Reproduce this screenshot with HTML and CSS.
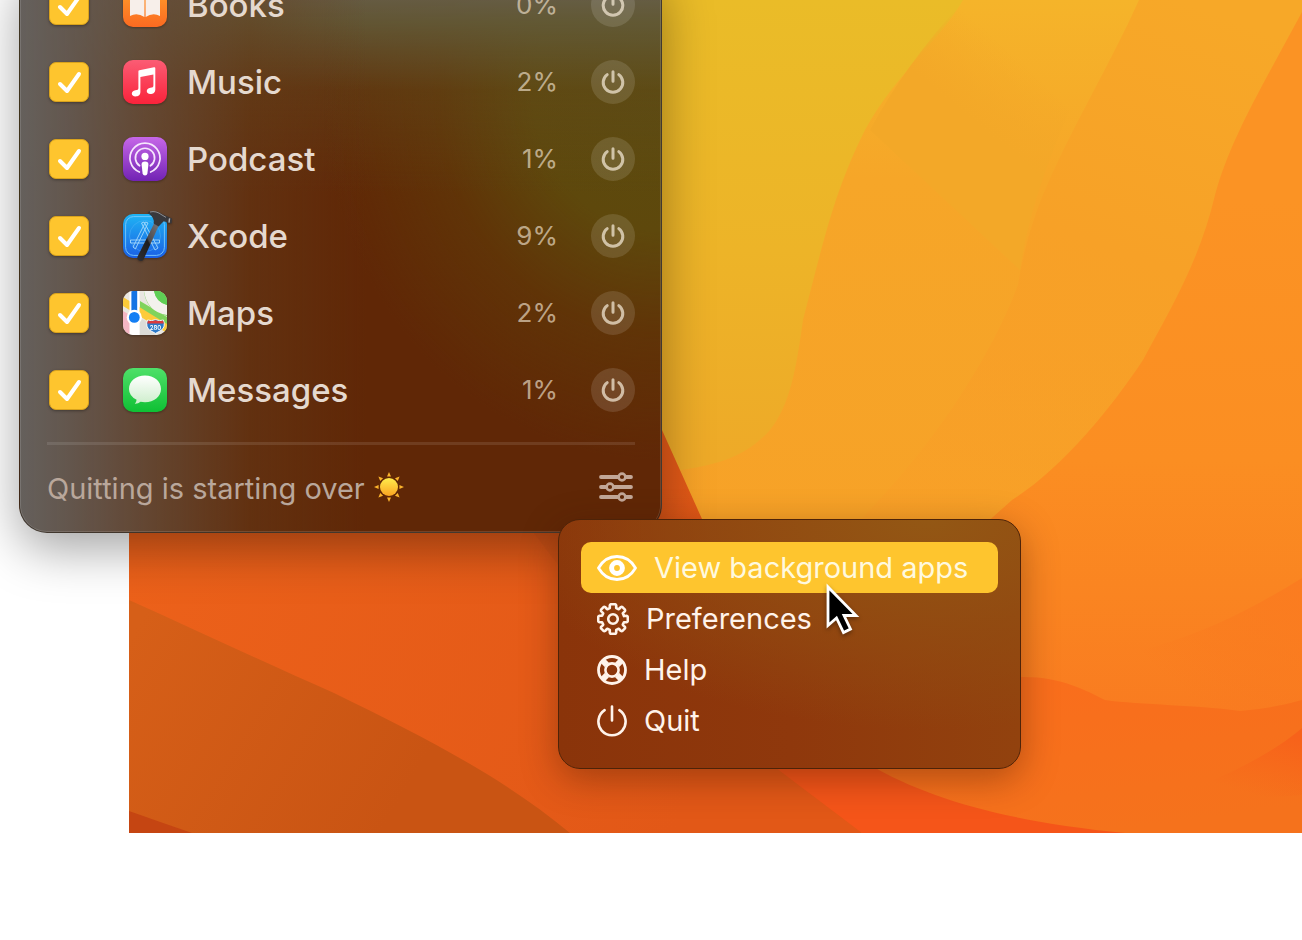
FILE: index.html
```
<!DOCTYPE html>
<html lang="en">
<head>
	<title>Background apps</title>
	<meta charset="utf-8">
	<meta name="viewport" content="width=device-width, initial-scale=1">
	<link rel="stylesheet" href="styles.css">
</head>
<body>

	<svg class="defs" aria-hidden="true">
		<symbol id="power" viewBox="0 0 24 24">
			<path d="M6.2 4.6a9.8 9.8 0 1 0 11.6 0M12 1.8v9.4" fill="none" stroke="currentColor" stroke-width="3" stroke-linecap="round"/>
		</symbol>
	</svg>

	<main class="desktop">

		<!-- wallpaper -->
		<svg class="wallpaper" viewBox="129 0 1173 833" aria-hidden="true">
			<defs>
				<linearGradient id="yellow" x1="0" y1="0" x2="0" y2="1">
					<stop offset="0" stop-color="#eabc28"/><stop offset=".3" stop-color="#edb428"/><stop offset=".6" stop-color="#eea828"/>
				</linearGradient>
				<linearGradient id="fold1" x1="0" y1="0" x2="0" y2="1">
					<stop offset="0" stop-color="#f5b42a"/><stop offset=".3" stop-color="#f6a628"/><stop offset="1" stop-color="#f7a127"/>
				</linearGradient>
				<linearGradient id="fold2" gradientUnits="userSpaceOnUse" x1="1180" y1="0" x2="1000" y2="480">
					<stop offset="0" stop-color="#f7a828"/><stop offset=".5" stop-color="#f7a127"/><stop offset="1" stop-color="#fa9b27" stop-opacity=".3"/>
				</linearGradient>
				<linearGradient id="facet" gradientUnits="userSpaceOnUse" x1="960" y1="110" x2="1010" y2="50">
					<stop offset="0" stop-color="#f3a828"/><stop offset="1" stop-color="#f3a828" stop-opacity="0"/>
				</linearGradient>
				<linearGradient id="fold3" gradientUnits="userSpaceOnUse" x1="1220" y1="200" x2="1220" y2="720">
					<stop offset="0" stop-color="#fb9324"/><stop offset=".5" stop-color="#fb8e22"/><stop offset="1" stop-color="#f97b20"/>
				</linearGradient>
				<linearGradient id="ridge" gradientUnits="userSpaceOnUse" x1="1290" y1="570" x2="1180" y2="690">
					<stop offset="0" stop-color="#fb7c20"/><stop offset="1" stop-color="#f9761e" stop-opacity="0"/>
				</linearGradient>
				<linearGradient id="lava" gradientUnits="userSpaceOnUse" x1="1080" y1="680" x2="1100" y2="833">
					<stop offset="0" stop-color="#f96e1c"/><stop offset="1" stop-color="#f5721c"/>
				</linearGradient>
				<linearGradient id="glow" gradientUnits="userSpaceOnUse" x1="1290" y1="735" x2="1270" y2="800">
					<stop offset="0" stop-color="#f7621a"/><stop offset="1" stop-color="#f7651a" stop-opacity="0"/>
				</linearGradient>
				<linearGradient id="ember" gradientUnits="userSpaceOnUse" x1="129" y1="560" x2="700" y2="760">
					<stop offset="0" stop-color="#ec611a"/><stop offset="1" stop-color="#e25817"/>
				</linearGradient>
				<linearGradient id="clay" gradientUnits="userSpaceOnUse" x1="129" y1="640" x2="400" y2="800">
					<stop offset="0" stop-color="#d65f18"/><stop offset="1" stop-color="#c95413"/>
				</linearGradient>
			</defs>
			<rect x="129" width="1173" height="833" fill="url(#yellow)"/>
			<path d="M963 0C940 40 895 75 865 130C835 190 825 235 803 320C796 370 790 405 770 430C745 458 715 465 680 470L700 600H1302V0z" fill="url(#fold1)"/>
			<path d="M961 4L1070 110Q1030 200 1020 270L870 130Q905 65 961 4z" fill="url(#facet)"/>
			<path d="M1139 0C1110 65 1070 130 1042 197Q1025 240 1018 285C990 360 930 450 860 520H1302V0z" fill="url(#fold2)"/>
			<path d="M1302 12C1260 90 1230 140 1215 195C1200 260 1170 310 1143 360C1110 410 1060 470 1012 500L900 600V833H1302z" fill="url(#fold3)"/>
			<path d="M1302 578C1250 610 1210 630 1160 645C1120 660 1060 640 1000 640V720H1302z" fill="url(#ridge)"/>
			<path d="M860 640Q960 675 1020 677C1060 676 1085 690 1105 700C1140 705 1200 705 1240 711Q1275 708 1302 700V833H860z" fill="url(#lava)"/>
			<path d="M1302 728Q1265 760 1190 790Q1250 800 1302 795z" fill="url(#glow)"/>
			<path d="M600 300L662 430 702 519 800 740 862 833H129V300z" fill="url(#ember)"/>
			<path d="M533 532L600 620V500z" fill="#dc5818" opacity=".7"/>
			<path d="M700 700C740 745 800 785 862 833H1125C1010 822 930 800 868 764L780 700z" fill="#f55519"/>
			<path d="M129 600C200 632 270 665 334 693C420 735 500 775 570 833H129z" fill="url(#clay)"/>
			<path d="M129 811Q160 822 192 833H129z" fill="#c54512"/>
		</svg>

		<!-- list of running apps -->
		<section class="panel" aria-label="Running apps">
			<ul class="apps">
				<li class="app">
					<label>
						<input type="checkbox" checked>
						<svg class="app-icon" viewBox="0 0 44 44">
							<defs><linearGradient id="books" x1="0" y1="0" x2="0" y2="1"><stop offset="0" stop-color="#ffa42c"/><stop offset="1" stop-color="#fb6a21"/></linearGradient></defs>
							<rect width="44" height="44" rx="10" fill="url(#books)"/>
							<path d="M21.4 13Q14 8 7 12V33Q14 29 21.4 34zM22.6 13Q30 8 37 12V33Q30 29 22.6 34z" fill="#f7efea"/>
						</svg>
						<span>Books</span>
					</label>
					<span class="cpu">0%</span>
					<button class="kill" aria-label="Quit Books"><svg><use href="#power"/></svg></button>
				</li>
				<li class="app">
					<label>
						<input type="checkbox" checked>
						<svg class="app-icon" viewBox="0 0 44 44">
							<defs><linearGradient id="music" x1="0" y1="0" x2="0" y2="1"><stop offset="0" stop-color="#fb5c74"/><stop offset="1" stop-color="#fa233b"/></linearGradient></defs>
							<rect width="44" height="44" rx="10" fill="url(#music)"/>
							<path d="M15.4 11.3Q15.4 10.4 16.4 10.2L31 7.3Q32.3 7 32.3 8.3V29.4C32.3 32.6 30 34 27.4 34C22.6 34 22.6 28.4 27.4 27.8C29.6 27.5 30.4 27.4 30.4 25.6V14.6L17.4 17.1V32C17.4 35.2 15.2 36.4 12.6 36.4C7.6 36.4 7.6 30.8 12.4 30.2C14.6 29.9 15.4 29.8 15.4 28z" fill="#fff"/>
						</svg>
						<span>Music</span>
					</label>
					<span class="cpu">2%</span>
					<button class="kill" aria-label="Quit Music"><svg><use href="#power"/></svg></button>
				</li>
				<li class="app">
					<label>
						<input type="checkbox" checked>
						<svg class="app-icon" viewBox="0 0 44 44">
							<defs><linearGradient id="podcast" x1="0" y1="0" x2="0" y2="1"><stop offset="0" stop-color="#c667e8"/><stop offset="1" stop-color="#7223b4"/></linearGradient></defs>
							<rect width="44" height="44" rx="10" fill="url(#podcast)"/>
							<g fill="none" stroke="#f6e6fd" stroke-width="1.7" stroke-linecap="round">
								<path d="M16.4 35A15 15 0 1 1 27.6 35"/>
								<path d="M16.6 28.8A9.6 9.6 0 1 1 27.4 28.8"/>
							</g>
							<circle cx="22" cy="19.4" r="3.6" fill="#fff"/>
							<path d="M18.6 27.4Q18.6 24.6 22 24.6T25.4 27.4L24.4 36.4Q24.1 38.4 22 38.4T19.6 36.4z" fill="#fff"/>
						</svg>
						<span>Podcast</span>
					</label>
					<span class="cpu">1%</span>
					<button class="kill" aria-label="Quit Podcast"><svg><use href="#power"/></svg></button>
				</li>
				<li class="app">
					<label>
						<input type="checkbox" checked>
						<svg class="app-icon" viewBox="0 0 44 44">
							<defs>
								<linearGradient id="xcode" x1="0" y1="0" x2="0" y2="1"><stop offset="0" stop-color="#1fb4f4"/><stop offset="1" stop-color="#1a5fe4"/></linearGradient>
								<linearGradient id="handle" x1="1" y1="0" x2="0" y2="1"><stop offset="0" stop-color="#77757a"/><stop offset=".45" stop-color="#4b4b50"/><stop offset=".5" stop-color="#1d1d20"/><stop offset="1" stop-color="#303034"/></linearGradient>
							</defs>
							<rect width="44" height="44" rx="10" fill="url(#xcode)"/>
							<rect x="2.6" y="2.6" width="38.8" height="38.8" rx="8" fill="none" stroke="#7cc9fb" stroke-width=".9"/>
							<circle cx="22" cy="22" r="15.5" fill="none" stroke="#5ab8f8" stroke-width=".6" opacity=".7"/>
							<g fill="none" stroke="#a5d8fc" stroke-width=".9" stroke-linejoin="round">
								<path d="M18.5 9L21 8 35 34 32 36zM25 9L22.5 8 10 33 12.4 35zM7.5 26H36.5V29H7.5z"/>
							</g>
							<path d="M31.4 9L35.8 11.4 20.6 45.4Q18.6 48 15.6 46.2Q13.6 45 14.6 42.4z" fill="url(#handle)"/>
							<path d="M25-2Q32-5 40 .4L44.6 2.4 49 4.4 48.6 9.6 44.6 9Q43 7 40.4 7.6L35.6 12.4 30.6 9.6Q32 4 25.4-.4z" fill="#38383c"/>
							<path d="M27-2Q33-3.6 39 1L43 3.4" fill="none" stroke="#98989c" stroke-width=".9"/>
							<path d="M46.6 4.4L46 8.6" stroke="#b0b0b4" stroke-width="1.4"/>
						</svg>
						<span>Xcode</span>
					</label>
					<span class="cpu">9%</span>
					<button class="kill" aria-label="Quit Xcode"><svg><use href="#power"/></svg></button>
				</li>
				<li class="app">
					<label>
						<input type="checkbox" checked>
						<svg class="app-icon" viewBox="0 0 44 44">
							<defs><clipPath id="mapclip"><rect width="44" height="44" rx="10"/></clipPath></defs>
							<g clip-path="url(#mapclip)">
								<rect width="44" height="44" fill="#e9e6e0"/>
								<path d="M17 10L44 26V34L30 26 17 18z" fill="#7fd35c"/>
								<path d="M21 0Q23 20 44 25V0z" fill="#7ad65a"/>
								<path d="M21 0Q24 21 44 24V14Q33 11 31 0z" fill="#f3f1ec"/>
								<path d="M31 0Q33 11 44 14V0z" fill="#5fcf55"/>
								<path d="M0 6L44 33V42L0 15z" fill="#fccb3a"/>
								<path d="M0 20L7 24V44H0z" fill="#f4b6c4"/>
								<path d="M17 27L32 36V44H17z" fill="#dcdcd8"/>
								<path d="M6.5 0H16.5V44H6.5z" fill="#fff"/>
								<path d="M8.4 0H14.2V24H8.4z" fill="#1474e4"/>
								<circle cx="11.3" cy="26.4" r="7.6" fill="#fff"/>
								<circle cx="11.3" cy="26.4" r="5.4" fill="#147ff4"/>
								<path d="M24.6 29Q28.5 30.4 32.5 28.6Q36.5 30.4 40.4 29Q43 36 38 39.4L32.5 42.4 27 39.4Q22 36 24.6 29z" fill="#2c79c8" stroke="#fff" stroke-width=".9"/>
								<path d="M25 29.4Q28.5 30.8 32.5 29.2Q36.5 30.8 40 29.4L40.8 32.4H24.2z" fill="#dc3a3c"/>
								<text x="32.5" y="38.8" class="shield">280</text>
							</g>
						</svg>
						<span>Maps</span>
					</label>
					<span class="cpu">2%</span>
					<button class="kill" aria-label="Quit Maps"><svg><use href="#power"/></svg></button>
				</li>
				<li class="app">
					<label>
						<input type="checkbox" checked>
						<svg class="app-icon" viewBox="0 0 44 44">
							<defs>
								<linearGradient id="msg" x1="0" y1="0" x2="0" y2="1"><stop offset="0" stop-color="#4fe069"/><stop offset="1" stop-color="#0fc034"/></linearGradient>
								<linearGradient id="bubble" x1="0" y1="0" x2="0" y2="1"><stop offset="0" stop-color="#fff"/><stop offset="1" stop-color="#cdeecb"/></linearGradient>
							</defs>
							<rect width="44" height="44" rx="10" fill="url(#msg)"/>
							<path d="M22 7.6C31 7.6 38 13.4 38 21C38 28.6 31 34.2 22 34.2Q19.6 34.2 17.6 33.8Q15 36 11.8 35.8Q13.4 34.2 13.6 31.8Q6 28 6 21C6 13.4 13 7.6 22 7.6z" fill="url(#bubble)"/>
						</svg>
						<span>Messages</span>
					</label>
					<span class="cpu">1%</span>
					<button class="kill" aria-label="Quit Messages"><svg><use href="#power"/></svg></button>
				</li>
			</ul>
			<footer class="panel-foot">
				<p>Quitting is starting over</p>
				<svg class="sun" viewBox="-15 -15 30 30" aria-hidden="true">
					<defs><linearGradient id="sunfill" x1="0" y1="0" x2="0" y2="1"><stop offset="0" stop-color="#ffec4c"/><stop offset="1" stop-color="#fba421"/></linearGradient></defs>
					<g fill="#fbb32c">
						<path d="M-2-10.4L0-15 2-10.4zM-2 10.4L0 15 2 10.4zM-10.4-2L-15 0-10.4 2zM10.4-2L15 0 10.4 2z"/>
						<path transform="rotate(45)" d="M-2-10.4L0-15 2-10.4zM-2 10.4L0 15 2 10.4zM-10.4-2L-15 0-10.4 2zM10.4-2L15 0 10.4 2z"/>
					</g>
					<circle r="9" fill="url(#sunfill)"/>
				</svg>
				<button class="options" aria-label="Options">
					<svg viewBox="0 0 34 30">
						<g fill="none" stroke="currentColor" stroke-width="3.8" stroke-linecap="round">
							<path d="M2 5H19M27 5H32M2 15H7M15 15H32M2 25H19M27 25H32"/>
							<g stroke-width="2.6"><circle cx="23" cy="5" r="3.4"/><circle cx="11" cy="15" r="3.4"/><circle cx="23" cy="25" r="3.4"/></g>
						</g>
					</svg>
				</button>
			</footer>
		</section>

		<!-- options menu -->
		<nav class="menu" aria-label="Options">
			<button class="menu-item active">
				<svg width="40" height="26" viewBox="0 0 40 26">
					<path d="M1.5 13C5.5 6 12 1.5 20 1.5S34.5 6 38.5 13C34.5 20 28 24.5 20 24.5S5.5 20 1.5 13z" fill="none" stroke="#fff" stroke-width="2.8" stroke-linejoin="round"/>
					<circle cx="20" cy="13" r="5.4" fill="none" stroke="#fff" stroke-width="5"/>
				</svg>
				View background apps
			</button>
			<button class="menu-item">
				<svg width="32" height="32" viewBox="-16 -16 32 32">
					<g fill="none" stroke="currentColor" stroke-width="2.6" stroke-linejoin="round">
						<path d="M10.9-2.9Q11.4-3.2 13.6-3.2 14.8-2.9 14.8-1.7V1.7Q14.8 2.9 13.6 3.2 11.4 3.2 10.9 3.2L9.8 5.65Q10.2 6.6 11.9 7.8 12.4 8.8 11.7 9.7L9.7 11.7Q8.8 12.4 7.8 11.9 6.6 10.2 5.65 9.8L3.2 10.9Q3.2 11.4 3.2 13.6 2.9 14.8 1.7 14.8H-1.7Q-2.9 14.8-3.2 13.6-3.2 11.4-3.2 10.9L-5.65 9.8Q-6.6 10.2-7.8 11.9-8.8 12.4-9.7 11.7L-11.7 9.7Q-12.4 8.8-11.9 7.8-10.2 6.6-9.8 5.65L-10.9 3.2Q-11.4 3.2-13.6 3.2-14.8 2.9-14.8 1.7V-1.7Q-14.8-2.9-13.6-3.2-11.4-3.2-10.9-3.2L-9.8-5.65Q-10.2-6.6-11.9-7.8-12.4-8.8-11.7-9.7L-9.7-11.7Q-8.8-12.4-7.8-11.9-6.6-10.2-5.65-9.8L-3.2-10.9Q-3.2-11.4-3.2-13.6-2.9-14.8-1.7-14.8H1.7Q2.9-14.8 3.2-13.6 3.2-11.4 3.2-10.9L5.65-9.8Q6.6-10.2 7.8-11.9 8.8-12.4 9.7-11.7L11.7-9.7Q12.4-8.8 11.9-7.8 10.2-6.6 9.8-5.65z"/>
						<circle r="4.8"/>
					</g>
				</svg>
				Preferences
			</button>
			<button class="menu-item">
				<svg width="30" height="30" viewBox="-15 -15 30 30">
					<g fill="none" stroke="currentColor">
						<circle r="13.5" stroke-width="2.8"/>
						<circle r="6.6" stroke-width="2.6"/>
						<path d="M5.2 5.2L9 9M-5.2 5.2L-9 9M5.2-5.2L9-9M-5.2-5.2L-9-9" stroke-width="6"/>
					</g>
				</svg>
				Help
			</button>
			<button class="menu-item">
				<svg width="30" height="32" viewBox="0 0 30 32">
					<path d="M7.6 5.2A13.6 13.6 0 1 0 22.4 5.2M15 1.5V15.5" fill="none" stroke="currentColor" stroke-width="2.6" stroke-linecap="round"/>
				</svg>
				Quit
			</button>
		</nav>

		<svg class="cursor" viewBox="0 0 36 54" aria-hidden="true">
			<path d="M3 4V42.5L11.5 35 18.5 49.5 25.5 46 19 32.5H31z" fill="#000" stroke="#fff" stroke-width="2.8"/>
		</svg>

	</main>

</body>
</html>
```
FILE: styles.css
```
*, *:before, *:after { box-sizing:border-box; }

body { margin:0; background-color:#fff; font-family:Inter, "Liberation Sans", sans-serif; overflow:hidden; }

ul, p { margin:0; padding:0; list-style:none; }

button { border:0; padding:0; background:none; color:inherit; font:inherit; cursor:default; }

.defs { display:none; }

.desktop { position:relative; padding-left:129px; min-height:100vh; overflow:hidden; }

.wallpaper { display:block; width:100%; }

/* ---- app list window ---- */

.panel {
	position:absolute; left:19px; top:-35px; width:643px;
	padding:0 26px 0 27px;
	border:1px solid rgba(50,40,30,0.7); border-radius:28px;
	background:
		linear-gradient(90deg, #65605c 0, rgba(99,88,80,0.95) 8%, rgba(100,74,54,0.8) 22%, rgba(100,60,28,0.45) 36%, rgba(98,46,10,0) 54%),
		linear-gradient(180deg, #6a6258 0, rgba(98,90,56,0.9) 10%, rgba(96,74,30,0.4) 22%, rgba(98,60,16,0) 40%),
		radial-gradient(ellipse 340px 370px at 100% 22%, #5c4b0e 0, #5e480c 38%, rgba(96,60,8,0.6) 66%, rgba(96,42,6,0) 100%),
		#602706;
	box-shadow:inset 0 0 0 1px rgba(255,255,255,0.13), 0 16px 50px rgba(0,0,0,0.36);
}

.app { display:flex; align-items:center; height:77px; }

.app label { display:flex; flex:1; align-items:center; font-size:33px; font-weight:500; color:#e5d9cf; }

.app input {
	appearance:none; width:40px; height:40px; margin:0 34px 0 2px;
	border:1px solid #d9a21c; border-radius:7px;
	background:#fec52e url("data:image/svg+xml,%3Csvg xmlns='http://www.w3.org/2000/svg' viewBox='0 0 38 38'%3E%3Cpath d='M10 21L17 28 29 11' fill='none' stroke='%23fff' stroke-width='4' stroke-linecap='round' stroke-linejoin='round'/%3E%3C/svg%3E") center / 38px;
	box-shadow:0 1px 3px rgba(0,0,0,0.35);
}

.app-icon { width:44px; height:44px; margin-right:20px; overflow:visible; filter:drop-shadow(0 1px 1px rgba(0,0,0,0.3)); }

.shield { font-size:6px; font-weight:600; fill:#fff; text-anchor:middle; }

.cpu { margin-right:33px; font-size:26px; color:rgba(236,222,200,0.68); }

.kill {
	display:grid; place-items:center; width:44px; height:44px;
	border-radius:50%; background-color:rgba(255,255,255,0.12); color:rgba(240,228,208,0.75);
}
.kill svg { width:24px; height:24px; }

.panel-foot {
	display:flex; align-items:center; height:90px; margin-top:14px;
	border-top:3px solid rgba(255,255,255,0.1);
	font-size:29px; color:#b9a79b;
}

.sun { width:30px; height:30px; margin:-4px 0 0 9px; }

.options { margin:-4px 2px 0 auto; color:#c2a797; }
.options svg { display:block; width:34px; height:30px; }

/* ---- popup menu ---- */

.menu {
	position:absolute; left:558px; top:519px; width:463px;
	padding:22px;
	border:1px solid #4e2308; border-radius:22px;
	background:
		radial-gradient(ellipse 420px 210px at 80% 0, #935714 0, rgba(146,78,18,0.75) 50%, rgba(143,62,14,0) 100%),
		linear-gradient(90deg, #8a340a, #8f380c 50%, #92420e);
	box-shadow:0 10px 36px rgba(60,20,0,0.38);
}

.menu-item {
	display:flex; align-items:center; gap:17px; width:100%; height:51px;
	padding:0 16px; border-radius:10px;
	font-size:29px; color:#fff3ea;
}

.menu-item.active { background-color:#fec52e; color:#fff9df; }

.cursor {
	position:absolute; left:825px; top:583px; width:36px; height:54px;
	filter:drop-shadow(0 2px 2px rgba(0,0,0,0.35));
}
```
